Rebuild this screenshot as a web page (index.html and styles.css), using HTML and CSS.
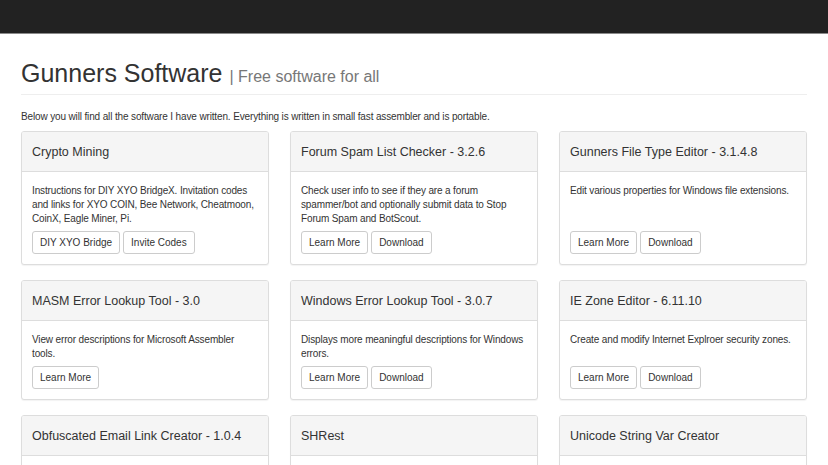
FILE: index.html
```html
<!DOCTYPE html>
<html lang="en">
<head>
    <meta charset="UTF-8">
    <title>Gunners Software</title>
    <link rel="stylesheet" href="styles.css">
</head>
<body>
    <div class="navbar"></div>

    <div class="container">
        <div class="page-header">
            <h1>Gunners Software <small>| Free software for all</small></h1>
        </div>

        <p class="intro">Below you will find all the software I have written. Everything is written in small fast assembler and is portable.</p>

        <div class="grid">
            <div class="panel">
                <div class="panel-heading">Crypto Mining</div>
                <div class="panel-body">
                    <p>Instructions for DIY XYO BridgeX. Invitation codes and links for XYO COIN, Bee Network, Cheatmoon, CoinX, Eagle Miner, Pi.</p>
                    <div class="actions">
                        <a class="btn" href="#">DIY XYO Bridge</a>
                        <a class="btn" href="#">Invite Codes</a>
                    </div>
                </div>
            </div>

            <div class="panel">
                <div class="panel-heading">Forum Spam List Checker - 3.2.6</div>
                <div class="panel-body">
                    <p>Check user info to see if they are a forum spammer/bot and optionally submit data to Stop Forum Spam and BotScout.</p>
                    <div class="actions">
                        <a class="btn" href="#">Learn More</a>
                        <a class="btn" href="#">Download</a>
                    </div>
                </div>
            </div>

            <div class="panel">
                <div class="panel-heading">Gunners File Type Editor - 3.1.4.8</div>
                <div class="panel-body">
                    <p>Edit various properties for Windows file extensions.</p>
                    <div class="actions">
                        <a class="btn" href="#">Learn More</a>
                        <a class="btn" href="#">Download</a>
                    </div>
                </div>
            </div>

            <div class="panel">
                <div class="panel-heading">MASM Error Lookup Tool - 3.0</div>
                <div class="panel-body">
                    <p>View error descriptions for Microsoft Assembler tools.</p>
                    <div class="actions">
                        <a class="btn" href="#">Learn More</a>
                    </div>
                </div>
            </div>

            <div class="panel">
                <div class="panel-heading">Windows Error Lookup Tool - 3.0.7</div>
                <div class="panel-body">
                    <p>Displays more meaningful descriptions for Windows errors.</p>
                    <div class="actions">
                        <a class="btn" href="#">Learn More</a>
                        <a class="btn" href="#">Download</a>
                    </div>
                </div>
            </div>

            <div class="panel">
                <div class="panel-heading">IE Zone Editor - 6.11.10</div>
                <div class="panel-body">
                    <p>Create and modify Internet Explroer security zones.</p>
                    <div class="actions">
                        <a class="btn" href="#">Learn More</a>
                        <a class="btn" href="#">Download</a>
                    </div>
                </div>
            </div>

            <div class="panel">
                <div class="panel-heading">Obfuscated Email Link Creator - 1.0.4</div>
                <div class="panel-body">
                    <p>Create email links that are hidden from spam harvesting bots.</p>
                    <div class="actions">
                        <a class="btn" href="#">Learn More</a>
                        <a class="btn" href="#">Download</a>
                    </div>
                </div>
            </div>

            <div class="panel">
                <div class="panel-heading">SHRest</div>
                <div class="panel-body">
                    <p>Restart the Windows shell without logging off.</p>
                    <div class="actions">
                        <a class="btn" href="#">Learn More</a>
                        <a class="btn" href="#">Download</a>
                    </div>
                </div>
            </div>

            <div class="panel">
                <div class="panel-heading">Unicode String Var Creator</div>
                <div class="panel-body">
                    <p>Create unicode string variables for assembler source.</p>
                    <div class="actions">
                        <a class="btn" href="#">Learn More</a>
                        <a class="btn" href="#">Download</a>
                    </div>
                </div>
            </div>
        </div>
    </div>
</body>
</html>
```

FILE: styles.css
```css
:root {
    --text: #333333;
    --muted: #777777;
    --border: #dddddd;
    --heading-bg: #f5f5f5;
}

body {
    margin: 0;
    font-family: 'Liberation Sans', Arial, Helvetica, sans-serif;
    font-size: 10px;
    line-height: 14px;
    letter-spacing: -0.14px;
    color: var(--text);
    background: #ffffff;
}

.navbar {
    height: 33px;
    background: #222222;
    border-bottom: 1px solid #8a8a8a;
}

.container {
    padding: 0 21px;
}

.page-header {
    margin-top: 25px;
    padding-bottom: 7px;
    border-bottom: 1px solid #eeeeee;
}

.page-header h1 {
    margin: 0;
    font-size: 25px;
    line-height: 28px;
    font-weight: normal;
    letter-spacing: 0;
    color: var(--text);
}

.page-header small {
    font-size: 16px;
    line-height: 1;
    color: var(--muted);
}

.intro {
    margin: 15px 0 7px;
}

.grid {
    display: grid;
    grid-template-columns: repeat(3, 1fr);
    column-gap: 21px;
    row-gap: 15px;
}

.panel {
    display: flex;
    flex-direction: column;
    border: 1px solid var(--border);
    border-radius: 3px;
    background: #ffffff;
    box-shadow: 0 1px 1px rgba(0, 0, 0, 0.05);
}

.panel-heading {
    height: 39px;
    display: flex;
    align-items: center;
    padding: 0 10px;
    background: var(--heading-bg);
    border-bottom: 1px solid var(--border);
    border-radius: 2px 2px 0 0;
    font-size: 12.5px;
    letter-spacing: 0;
}

.panel-body {
    flex: 1;
    display: flex;
    flex-direction: column;
    padding: 12px 10px 10px;
}

.panel-body p {
    flex: 1;
    margin: 0 0 5px;
}

.actions {
    display: flex;
    gap: 3px;
}

.btn {
    display: inline-flex;
    align-items: center;
    height: 21px;
    padding: 0 7px;
    border: 1px solid #cccccc;
    border-radius: 3px;
    background: #ffffff;
    color: var(--text);
    font-size: 10px;
    letter-spacing: 0;
    text-decoration: none;
}
```
